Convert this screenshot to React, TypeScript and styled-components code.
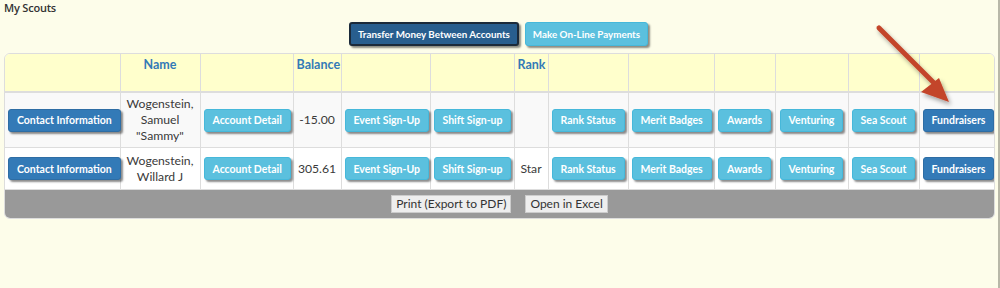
import styled, { createGlobalStyle } from 'styled-components'

const GlobalStyle = createGlobalStyle`
  html, body {
    margin: 0;
    padding: 0;
    background: #fdfdea;
  }
  body {
    font-family: Lato, "Open Sans", sans-serif;
    color: #333;
  }
`

const Page = styled.div`
  position: relative;
  width: 1000px;
  height: 288px;
  padding: 0 5px 0 4px;
  box-sizing: border-box;
  border-right: 2px solid #b8b8a8;
  overflow: hidden;
`

const Title = styled.div`
  font-family: "Open Sans", sans-serif;
  font-size: 11px;
  font-weight: 600;
  line-height: 14px;
  padding-top: 1px;
  letter-spacing: -0.2px;
`

const TopBar = styled.div`
  display: flex;
  justify-content: center;
  gap: 6px;
  margin-top: 7px;
  margin-bottom: 7px;
`

const Btn = styled.button<{ $dark?: boolean }>`
  font-family: Lato, "Open Sans", sans-serif;
  font-size: 10.5px;
  font-weight: 700;
  color: #fff;
  background: ${({ $dark }) => ($dark ? '#337ab7' : '#5bc0de')};
  border: 1px solid ${({ $dark }) => ($dark ? '#2e6da4' : '#46b8da')};
  border-radius: 3px;
  height: 23px;
  padding: 0 8px;
  white-space: nowrap;
  box-shadow: 2px 2px 2px rgba(0, 0, 0, 0.45);
  cursor: pointer;
`

const TopBtn = styled(Btn)<{ $active?: boolean }>`
  font-size: 9.8px;
  height: 24px;
  padding: 0 7px;
  ${({ $active }) =>
    $active &&
    `
    background: #285e8e;
    border: 2px solid #1b2a3a;
  `}
`

const TableWrap = styled.div`
  width: 991px;
  border: 1px solid #ddd;
  border-radius: 6px;
  overflow: hidden;
  background: #fff;
  box-sizing: border-box;
`

const Table = styled.table`
  width: 100%;
  border-collapse: collapse;
  table-layout: fixed;
`

const HeadCell = styled.th`
  background: #ffffcc;
  color: #337ab7;
  font-size: 12.5px;
  font-weight: 700;
  height: 34px;
  padding: 3px 3px 0;
  vertical-align: top;
  text-align: center;
  border-right: 1px solid #ddd;
  border-bottom: 2px solid #ddd;
  &:last-child {
    border-right: none;
  }
`

const Row = styled.tr<{ $odd?: boolean }>`
  background: ${({ $odd }) => ($odd ? '#f9f9f9' : '#fff')};
  border-bottom: 1px solid #ddd;
`

const Cell = styled.td`
  font-size: 12.2px;
  line-height: 16px;
  color: #3a3a3a;
  height: 35px;
  text-align: center;
  vertical-align: middle;
  padding: 3px 3px;
  border-right: 1px solid #ddd;
  &:last-child {
    border-right: none;
  }
`

const FooterBar = styled.div`
  display: flex;
  justify-content: center;
  align-items: center;
  gap: 14px;
  height: 28px;
  background: #999;
`

const PlainBtn = styled.button`
  font-family: Lato, "Open Sans", sans-serif;
  font-size: 12px;
  color: #333;
  background: #eee;
  border: 1px solid #ccc;
  height: 18px;
  padding: 0 4px;
  line-height: 14px;
`

const ArrowLayer = styled.svg`
  position: absolute;
  left: 860px;
  top: 20px;
  pointer-events: none;
`

const cols = [115, 80, 93, 48, 89, 84, 34, 80, 86, 61, 73, 71, 77]

const scouts = [
  { name: 'Wogenstein, Samuel "Sammy"', balance: '-15.00', rank: '' },
  { name: 'Wogenstein, Willard J', balance: '305.61', rank: 'Star' },
]

const headers = ['', 'Name', '', 'Balance', '', '', 'Rank', '', '', '', '', '', '']

export default function App() {
  return (
    <>
      <GlobalStyle />
      <Page>
        <Title>My Scouts</Title>
        <TopBar>
          <TopBtn $dark $active>Transfer Money Between Accounts</TopBtn>
          <TopBtn>Make On-Line Payments</TopBtn>
        </TopBar>
        <TableWrap>
          <Table>
            <colgroup>
              {cols.map((w, i) => (
                <col key={i} style={{ width: w }} />
              ))}
            </colgroup>
            <thead>
              <tr>
                {headers.map((h, i) => (
                  <HeadCell key={i}>{h}</HeadCell>
                ))}
              </tr>
            </thead>
            <tbody>
              {scouts.map((s, i) => (
                <Row key={s.name} $odd={i === 0}>
                  <Cell><Btn $dark>Contact Information</Btn></Cell>
                  <Cell>{s.name}</Cell>
                  <Cell><Btn>Account Detail</Btn></Cell>
                  <Cell>{s.balance}</Cell>
                  <Cell><Btn>Event Sign-Up</Btn></Cell>
                  <Cell><Btn>Shift Sign-up</Btn></Cell>
                  <Cell>{s.rank}</Cell>
                  <Cell><Btn>Rank Status</Btn></Cell>
                  <Cell><Btn>Merit Badges</Btn></Cell>
                  <Cell><Btn>Awards</Btn></Cell>
                  <Cell><Btn>Venturing</Btn></Cell>
                  <Cell><Btn>Sea Scout</Btn></Cell>
                  <Cell><Btn $dark>Fundraisers</Btn></Cell>
                </Row>
              ))}
            </tbody>
          </Table>
          <FooterBar>
            <PlainBtn>Print (Export to PDF)</PlainBtn>
            <PlainBtn>Open in Excel</PlainBtn>
          </FooterBar>
        </TableWrap>
        <ArrowLayer width="110" height="100" viewBox="0 0 110 100">
          <defs>
            <filter id="sh" x="-20%" y="-20%" width="150%" height="150%">
              <feDropShadow dx="2" dy="3" stdDeviation="2" floodColor="#000" floodOpacity="0.35" />
            </filter>
          </defs>
          <g filter="url(#sh)">
            <line x1="19" y1="8" x2="78" y2="67" stroke="#c3452b" strokeWidth="5" strokeLinecap="round" />
            <polygon points="89,82 61,72 79,58" fill="#c3452b" />
          </g>
        </ArrowLayer>
      </Page>
    </>
  )
}
